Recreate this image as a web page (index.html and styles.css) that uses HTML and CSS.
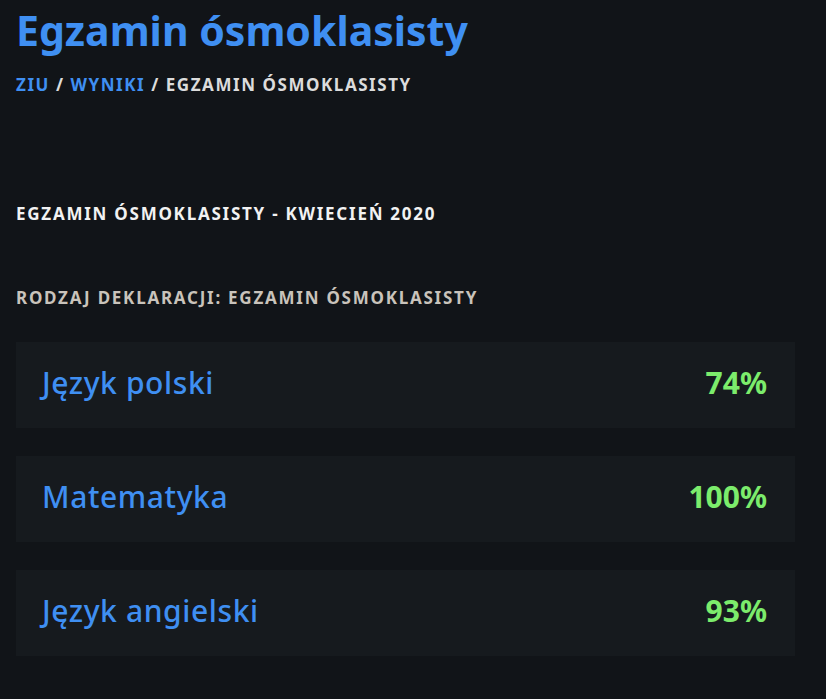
FILE: index.html
```html
<!DOCTYPE html>
<html lang="pl">
<head>
<meta charset="utf-8">
<link rel="stylesheet" href="styles.css">
</head>
<body>
<main class="page">
  <h1 class="title">Egzamin ósmoklasisty</h1>
  <nav class="crumbs"><a class="crumb-link">ZIU</a> / <a class="crumb-link">WYNIKI</a> / <span>EGZAMIN ÓSMOKLASISTY</span></nav>
  <h2 class="session">EGZAMIN ÓSMOKLASISTY - KWIECIEŃ 2020</h2>
  <h3 class="decl">RODZAJ DEKLARACJI: EGZAMIN ÓSMOKLASISTY</h3>
  <ul class="results">
    <li class="card"><span class="subject">Język polski</span><span class="score">74%</span></li>
    <li class="card"><span class="subject">Matematyka</span><span class="score">100%</span></li>
    <li class="card"><span class="subject">Język angielski</span><span class="score">93%</span></li>
  </ul>
</main>
</body>
</html>
```
FILE: styles.css
```css
html, body {
  margin: 0;
  padding: 0;
  background: #111418;
}
body {
  font-family: "Noto Sans", "Open Sans", sans-serif;
}
.page {
  padding: 2px 31px 0 16px;
  display: flex;
  flex-direction: column;
}
.title {
  margin: 0;
  font-size: 41px;
  font-weight: 700;
  color: #3f8ff2;
  line-height: 56px;
}
.crumbs {
  margin-top: 16px;
  font-size: 17px;
  font-weight: 700;
  letter-spacing: 1.55px;
  color: #dcdcdc;
  line-height: 22px;
}
.crumb-link {
  color: #3f8ff2;
}
.session {
  margin: 107px 0 0;
  font-size: 17px;
  font-weight: 700;
  letter-spacing: 1.75px;
  color: #f2f2f2;
  line-height: 22px;
}
.decl {
  margin: 62px 0 0;
  font-size: 17px;
  font-weight: 700;
  letter-spacing: 1.75px;
  color: #c9c3bb;
  line-height: 22px;
}
.results {
  list-style: none;
  margin: 33px 0 0;
  padding: 0;
  display: flex;
  flex-direction: column;
  gap: 28px;
}
.card {
  height: 86px;
  box-sizing: border-box;
  background: #161a1e;
  display: flex;
  align-items: center;
  justify-content: space-between;
  padding: 0 28px 6px 26px;
}
.subject {
  font-size: 30px;
  font-weight: 500;
  letter-spacing: 0.6px;
  color: #3f8ff2;
}
.score {
  font-size: 30px;
  font-weight: 700;
  color: #7cec6c;
}
```
